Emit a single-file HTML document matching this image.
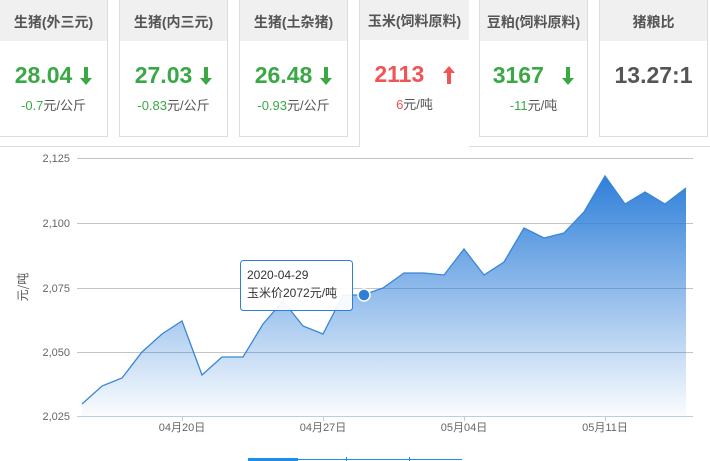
<!DOCTYPE html>
<html><head><meta charset="utf-8"><style>
*{margin:0;padding:0;box-sizing:border-box}
body{width:710px;height:461px;overflow:hidden;background:#fff;font-family:"Liberation Sans","Noto Sans CJK SC",sans-serif;position:relative}
.card{position:absolute;top:-2px;width:109px;height:139px;border:1px solid #ddd;background:#fff}
.card .h{height:42px;background:#f0f0f0;color:#555;font-size:14px;font-weight:bold;text-align:center;line-height:46px}
.card .v{text-align:center;font-size:23px;font-weight:bold;margin-top:20px;height:28px;line-height:28px}
.card .s{text-align:center;font-size:13px;color:#555;margin-top:6px}
.g{color:#3aa845}.r{color:#f05454}
.ar{display:inline-block;width:12px;height:18px;margin-left:8px;vertical-align:-2px}
.line{position:absolute;top:146px;height:1px;background:#ddd}
</style></head><body>
<div class="line" style="left:0;width:360px"></div>
<div class="line" style="left:468px;width:242px"></div>
<div class="card" style="left:-1px"><div class="h">生猪(外三元)</div><div class="v g">28.04<svg class="ar" viewBox="0 0 12 18"><path d="M4 0h4v11h4L6 18 0 11h4z" fill="#3aa845"/></svg></div><div class="s"><span class="g">-0.7</span>元/公斤</div></div>
<div class="card" style="left:119px"><div class="h">生猪(内三元)</div><div class="v g">27.03<svg class="ar" viewBox="0 0 12 18"><path d="M4 0h4v11h4L6 18 0 11h4z" fill="#3aa845"/></svg></div><div class="s"><span class="g">-0.83</span>元/公斤</div></div>
<div class="card" style="left:239px"><div class="h">生猪(土杂猪)</div><div class="v g">26.48<svg class="ar" viewBox="0 0 12 18"><path d="M4 0h4v11h4L6 18 0 11h4z" fill="#3aa845"/></svg></div><div class="s"><span class="g">-0.93</span>元/公斤</div></div>
<div class="card" style="left:359px;height:149px;border-bottom:none;border-top:none;border-right:none;width:110px"><div class="h">玉米(饲料原料)</div><div class="v r">2113 <svg class="ar" style="margin-left:12px" viewBox="0 0 12 18"><path d="M4 18h4V7h4L6 0 0 7h4z" fill="#f05454"/></svg></div><div class="s"><span class="r">6</span>元/吨</div></div>
<div class="card" style="left:479px"><div class="h">豆粕(饲料原料)</div><div class="v g">3167 <svg class="ar" style="margin-left:12px" viewBox="0 0 12 18"><path d="M4 0h4v11h4L6 18 0 11h4z" fill="#3aa845"/></svg></div><div class="s"><span class="g">-11</span>元/吨</div></div>
<div class="card" style="left:599px"><div class="h">猪粮比</div><div class="v" style="color:#555">13.27:1</div></div>
<svg style="position:absolute;left:0;top:0" width="710" height="461">
<defs><linearGradient id="gr" x1="0" y1="0" x2="0" y2="1"><stop offset="0" stop-color="#2f7fd9"/><stop offset="1" stop-color="#2f7fd9" stop-opacity="0.02"/></linearGradient></defs>
<g stroke="#c4c4c4" stroke-width="1">
<line x1="77" y1="158.5" x2="693" y2="158.5"/><line x1="77" y1="223.5" x2="693" y2="223.5"/><line x1="77" y1="288.5" x2="693" y2="288.5"/><line x1="77" y1="352.5" x2="693" y2="352.5"/></g>
<line x1="77" y1="416.5" x2="693" y2="416.5" stroke="#b8cde6"/>
<g stroke="#b8cde6"><line x1="182.5" y1="416" x2="182.5" y2="421"/><line x1="323.5" y1="416" x2="323.5" y2="421"/><line x1="464.5" y1="416" x2="464.5" y2="421"/><line x1="605.5" y1="416" x2="605.5" y2="421"/></g>
<polygon fill="url(#gr)" points="82,416 82,404 102,386 122,378 142,352 162,334 182,321 202,375 222,357 243,357 263,324 283,301 303,326 323,334 343,295 363,295 383,288 404,273 424,273 444,275 464,249 484,275 504,262 524,228 544,238 564,233 584,212 605,176 625,204 645,192 665,204 686,188 686,416"/>
<polyline fill="none" stroke="#3a86d8" stroke-width="1.3" points="82,404 102,386 122,378 142,352 162,334 182,321 202,375 222,357 243,357 263,324 283,301 303,326 323,334 343,295 363,295 383,288 404,273 424,273 444,275 464,249 484,275 504,262 524,228 544,238 564,233 584,212 605,176 625,204 645,192 665,204 686,188"/>
<circle cx="364" cy="295" r="6" fill="#2f7fd9" stroke="#fff" stroke-width="1.5"/>
<g font-size="11" fill="#666" text-anchor="end" font-family="Liberation Sans,sans-serif">
<text x="70" y="162">2,125</text><text x="70" y="227">2,100</text><text x="70" y="292">2,075</text><text x="70" y="356">2,050</text><text x="70" y="420">2,025</text></g>
<g font-size="11" fill="#666" text-anchor="middle" font-family="Liberation Sans,Noto Sans CJK SC,sans-serif">
<text x="182" y="431">04月20日</text><text x="323" y="431">04月27日</text><text x="464" y="431">05月04日</text><text x="605" y="431">05月11日</text></g>
<text transform="translate(27,287) rotate(-90)" text-anchor="middle" font-size="12" fill="#555" font-family="Noto Sans CJK SC,sans-serif">元/吨</text>
<rect x="240.5" y="260.5" width="112" height="50" rx="3" fill="#fff" fill-opacity="0.92" stroke="#2f7fd9"/>
<g font-size="12" fill="#333" font-family="Liberation Sans,Noto Sans CJK SC,sans-serif"><text x="247" y="279">2020-04-29</text><text x="247" y="297">玉米价2072元/吨</text></g>
<rect x="248" y="458" width="50" height="3" fill="#1e8ee8"/>
<line x1="298" y1="459.5" x2="462" y2="459.5" stroke="#1e8ee8"/>
<line x1="346.5" y1="457" x2="346.5" y2="461" stroke="#1e8ee8"/><line x1="409.5" y1="457" x2="409.5" y2="461" stroke="#1e8ee8"/>
</svg>
</body></html>
